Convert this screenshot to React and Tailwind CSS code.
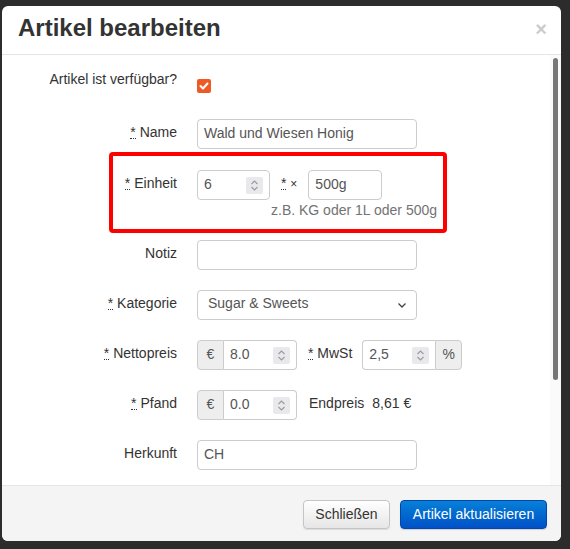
import React from "react";

const Req = ({ children }) => (
	<span>
		<abbr className="no-underline border-b border-dotted border-[#333] leading-[12px] inline-block h-[13px]" title="Pflichtfeld">*</abbr>{" "}
		{children}
	</span>
);

const Spinner = () => (
	<div className="w-[17px] h-[17px] rounded-[2px] bg-[#e9e9ed] flex items-center justify-center">
		<svg width="9" height="13" viewBox="0 0 9 13" fill="none" stroke="#9a9a9a" strokeWidth="1.1">
			<path d="M1.5 5 L4.5 2 L7.5 5" />
			<path d="M1.5 8 L4.5 11 L7.5 8" />
		</svg>
	</div>
);

const NumberInput = ({ value, className = "rounded-[4px]" }) => (
	<div className={`w-[73px] h-[30px] border border-[#ccc] bg-white flex items-center justify-between pl-[6px] pr-[6px] text-[#555] ${className}`}>
		<span className="pb-[2px]">{value}</span>
		<Spinner />
	</div>
);

const TextInput = ({ value = "" }) => (
	<div className="w-[220px] h-[30px] border border-[#ccc] rounded-[4px] bg-white flex items-center px-[6px] pb-[2px] text-[#555]">
		{value}
	</div>
);

const Addon = ({ children, className }) => (
	<div className={`w-[27px] h-[30px] border border-[#ccc] bg-[#eee] flex items-center justify-center pb-[2px] text-[#555] ${className}`}>
		{children}
	</div>
);

const Row = ({ label, children, className = "" }) => (
	<div className={`flex items-center h-[30px] ${className}`}>
		<div className="w-[175px] text-right pb-[3px]">{label}</div>
		<div className="ml-[20px] flex items-center">{children}</div>
	</div>
);

export default function App() {
	return (
		<div
			className="w-[570px] h-[549px] bg-[#2c2c2c] pt-[6px] pl-[2px] overflow-hidden text-[14px] text-[#333]"
			style={{ fontFamily: '"Liberation Sans", Arial, sans-serif' }}
		>
			<div className="w-[559px] h-[535px] bg-white rounded-[6px] overflow-hidden flex flex-col">
				{/* header */}
				<div className="h-[49px] shrink-0 border-b border-[#e5e5e5] flex items-center justify-between pl-[16px] pr-[14px]">
					<h3 className="text-[24px] font-bold leading-none pb-[4px]">Artikel bearbeiten</h3>
					<span className="text-[20px] font-bold text-black opacity-20 leading-none pb-[2px]">×</span>
				</div>

				{/* body */}
				<div className="flex-1 relative overflow-hidden pt-[14px]">
					<Row label="Artikel ist verfügbar?" className="!items-start">
						<div className="mt-[10px] w-[14px] h-[14px] rounded-[2px] bg-[#ee5a24] flex items-center justify-center">
							<svg width="10" height="8" viewBox="0 0 10 8" fill="none" stroke="white" strokeWidth="2" strokeLinecap="round" strokeLinejoin="round">
								<path d="M1.5 4 L4 6.5 L8.5 1.5" />
							</svg>
						</div>
					</Row>

					<Row label={<Req>Name</Req>} className="mt-[20px]">
						<TextInput value="Wald und Wiesen Honig" />
					</Row>

					<div className="mt-[3px] ml-[107px] w-[338px] h-[81px] border-4 border-[#ff0000] rounded-[4px] pt-[14px]">
						<div className="flex items-center h-[30px]">
							<div className="w-[64px] text-right pb-[3px]"><Req>Einheit</Req></div>
							<div className="ml-[20px] flex items-center">
								<NumberInput value="6" />
								<span className="ml-[11px] pb-[3px]"><Req><span className="text-[12px]">×</span></Req></span>
								<div className="ml-[11px] w-[74px] h-[30px] border border-[#ccc] rounded-[4px] flex items-center px-[6px] pb-[2px] text-[#555]">500g</div>
							</div>
						</div>
						<div className="ml-[158px] text-[#737373] leading-[20px]">z.B. KG oder 1L oder 500g</div>
					</div>

					<Row label="Notiz" className="mt-[7px]">
						<TextInput />
					</Row>

					<Row label={<Req>Kategorie</Req>} className="mt-[20px]">
						<div className="w-[220px] h-[30px] border border-[#ccc] rounded-[4px] bg-white flex items-center justify-between pl-[10px] pr-[9px] text-[#555]">
							<span className="pb-[3px]">Sugar &amp; Sweets</span>
							<svg width="10" height="7" viewBox="0 0 10 7" fill="none" stroke="#444" strokeWidth="1.3">
								<path d="M1.5 1.5 L5 5 L8.5 1.5" />
							</svg>
						</div>
					</Row>

					<Row label={<Req>Nettopreis</Req>} className="mt-[20px]">
						<Addon className="rounded-l-[4px]">€</Addon>
						<NumberInput value="8.0" className="rounded-r-[4px] border-l-0" />
						<span className="ml-[11px] pb-[3px]"><Req>MwSt</Req></span>
						<div className="ml-[10px] flex">
							<NumberInput value="2,5" className="rounded-l-[4px] border-r-0" />
							<Addon className="rounded-r-[4px]">%</Addon>
						</div>
					</Row>

					<Row label={<Req>Pfand</Req>} className="mt-[20px]">
						<Addon className="rounded-l-[4px]">€</Addon>
						<NumberInput value="0.0" className="rounded-r-[4px] border-l-0" />
						<span className="ml-[12px] pb-[3px]">Endpreis</span>
						<span className="ml-[8px] pb-[3px]">8,61 €</span>
					</Row>

					<Row label="Herkunft" className="mt-[20px]">
						<TextInput value="CH" />
					</Row>

					{/* scrollbar */}
					<div className="absolute top-0 right-0 bottom-0 w-[11px] bg-[#fafafa]">
						<div className="mt-[3px] ml-[3px] w-[5px] h-[322px] rounded-full bg-[#777]" />
					</div>
				</div>

				{/* footer */}
				<div className="h-[56px] shrink-0 border-t border-[#e5e5e5] bg-[#f4f4f4] flex items-center justify-end gap-[10px] pr-[14px] pt-[1px]">
					<button className="w-[87px] h-[29px] rounded-[4px] border border-[#c5c5c5] bg-gradient-to-b from-white to-[#e6e6e6] text-[#333] shadow-[0_1px_1px_rgba(0,0,0,0.1)]">
						Schließen
					</button>
					<button className="w-[147px] h-[29px] rounded-[4px] border border-[#0345b0] bg-gradient-to-b from-[#0a80d8] to-[#0350c6] text-white shadow-[0_1px_1px_rgba(0,0,0,0.15)]">
						Artikel aktualisieren
					</button>
				</div>
			</div>
		</div>
	);
}
